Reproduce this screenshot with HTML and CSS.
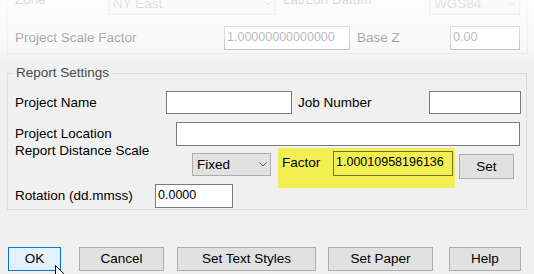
FILE: index.html
```html
<!DOCTYPE html>
<html lang="en">
<head>
    <meta charset="UTF-8">
    <title>Report Settings</title>
    <link rel="stylesheet" href="styles.css">
</head>
<body>
    <div class="group group-top">
        <div class="row row-combo">
            <span class="label lbl-zone">Zone</span>
            <div class="combo combo-zone">
                <span>NY East</span>
                <svg width="8" height="5" viewBox="0 0 8 5"><polyline points="0.5,0.5 4,4 7.5,0.5" /></svg>
            </div>
            <span class="label lbl-datum">Lat/Lon Datum</span>
            <div class="combo combo-datum">
                <span>WGS84</span>
                <svg width="8" height="5" viewBox="0 0 8 5"><polyline points="0.5,0.5 4,4 7.5,0.5" /></svg>
            </div>
        </div>
        <div class="row row-scale">
            <span class="label lbl-scale">Project Scale Factor</span>
            <input type="text" class="field field-scale" value="1.00000000000000">
            <span class="label lbl-basez">Base Z</span>
            <input type="text" class="field field-basez" value="0.00">
        </div>
    </div>

    <div class="group group-report">
        <span class="group-title">Report Settings</span>

        <div class="row row-name">
            <span class="label lbl-name">Project Name</span>
            <input type="text" class="field field-name">
            <span class="label lbl-job">Job Number</span>
            <input type="text" class="field field-job">
        </div>

        <div class="row row-location">
            <span class="label lbl-location">Project Location</span>
            <input type="text" class="field field-location">
        </div>

        <div class="row row-distance">
            <span class="label lbl-distance">Report Distance Scale</span>
            <div class="combo combo-fixed">
                <span>Fixed</span>
                <svg width="8" height="5" viewBox="0 0 8 5"><polyline points="0.5,0.5 4,4 7.5,0.5" /></svg>
            </div>
            <div class="highlight">
                <span class="label lbl-factor">Factor</span>
                <input type="text" class="field field-factor" value="1.00010958196136">
            </div>
            <button class="btn btn-set">Set</button>
        </div>

        <div class="row row-rotation">
            <span class="label lbl-rotation">Rotation (dd.mmss)</span>
            <input type="text" class="field field-rotation" value="0.0000">
        </div>
    </div>

    <div class="buttons">
        <button class="btn btn-ok">OK</button>
        <button class="btn btn-cancel">Cancel</button>
        <button class="btn btn-styles">Set Text Styles</button>
        <button class="btn btn-paper">Set Paper</button>
        <button class="btn btn-help">Help</button>
    </div>

    <!-- weisser Verlauf oben und Mauszeiger liegen ueber dem Dialog -->
    <div class="fade"></div>
    <svg class="cursor" width="13" height="20" viewBox="0 0 13 20">
        <path d="M0.5 0.5 L0.5 16.5 L4.5 12.5 L7.5 18.5 L9.5 17.5 L6.5 11.5 L11.5 11.5 Z" />
    </svg>
</body>
</html>
```

FILE: styles.css
```css
* {
    box-sizing: border-box;
}

body {
    margin: 0;
    width: 534px;
    height: 274px;
    overflow: hidden;
    position: relative;
    background-color: #f0f0f0;
    font-family: 'Liberation Sans', Arial, sans-serif;
    font-size: 13.5px;
    color: #000;
}

.group {
    position: relative;
    margin-left: 7px;
    border: 1px solid #dcdcdc;
}

.group-top {
    width: 521px;
    margin-top: -30px;
    padding: 21px 0 3px 7px;
}

.group-report {
    width: 520px;
    margin-top: 19px;
    padding: 17px 0 1px 7px;
}

.group-title {
    position: absolute;
    top: -9px;
    left: 5px;
    padding: 0 3px;
    line-height: 16px;
    background-color: #f0f0f0;
    color: #4a4a4a;
}

.row {
    display: flex;
    align-items: center;
}

.label {
    display: block;
    flex: none;
    line-height: 16px;
    white-space: nowrap;
}

.field {
    flex: none;
    display: block;
    margin: 0;
    padding: 0 2px 3px;
    border: 1px solid #7a7a7a;
    background-color: #fff;
    font-family: 'Liberation Sans', Arial, sans-serif;
    font-size: 12.5px;
    color: #000;
    outline: none;
}

.combo {
    flex: none;
    display: flex;
    align-items: center;
    justify-content: space-between;
    padding: 0 3px 0 4px;
    border: 1px solid #adadad;
    background-color: #e1e1e1;
}

.combo svg polyline {
    fill: none;
    stroke: #606060;
    stroke-width: 1;
}

.btn {
    flex: none;
    margin: 0;
    padding: 0 0 1px;
    border: 1px solid #adadad;
    background-color: #e1e1e1;
    font-family: 'Liberation Sans', Arial, sans-serif;
    font-size: 13.5px;
    color: #000;
}

/* oberer, abgeblendeter Bereich */
.row-combo {
    height: 23px;
    align-items: flex-start;
}

.row-combo .combo {
    height: 23px;
    color: #444;
}

.lbl-zone { width: 93px; }
.combo-zone { width: 168px; }
.lbl-datum { width: 146px; margin-left: 7px; }
.combo-datum { width: 91px; }

.row-scale {
    height: 24px;
    margin-top: 11px;
}

.row-scale .field {
    height: 24px;
    border-color: #8a8a8a;
    color: #1d2c4a;
}

.lbl-scale { width: 209px; }
.field-scale { width: 126px; }
.lbl-basez { width: 93px; margin-left: 7px; }
.field-basez { width: 70px; }

/* Report Settings */
.row-name {
    height: 23px;
}

.row-name .field {
    height: 23px;
}

.lbl-name { width: 151px; }
.field-name { width: 126px; }
.lbl-job { width: 131px; margin-left: 6px; }
.field-job { width: 92px; }

.row-location {
    height: 24px;
    margin-top: 8px;
}

.lbl-location { width: 161px; }
.field-location { width: 344px; height: 24px; }

.row-distance {
    height: 23px;
    margin-top: 7px;
    align-items: flex-start;
}

.lbl-distance {
    width: 177px;
    margin-top: -10px;
}

.combo-fixed {
    width: 79px;
    height: 23px;
}

.highlight {
    flex: none;
    display: flex;
    align-items: center;
    width: 177px;
    height: 40px;
    margin: -5px 0 0 7px;
    padding: 0 2px 10px 4px;
    background-color: #f1ef52;
}

.lbl-factor { width: 51px; }

.field-factor {
    width: 120px;
    height: 25px;
    border-color: #74722c;
    background-color: transparent;
}

.btn-set {
    width: 55px;
    height: 25px;
    margin: 1px 0 0 4px;
}

.row-rotation {
    height: 24px;
    margin-top: 8px;
}

.lbl-rotation { width: 140px; }
.field-rotation { width: 78px; height: 24px; }

/* Schaltflaechen unten */
.buttons {
    display: flex;
    height: 24px;
    margin-top: 37px;
    padding-left: 8px;
}

.buttons .btn {
    height: 24px;
}

.btn-ok {
    width: 53px;
    border-color: #0078d7;
    background-color: #e5f1fb;
}

.btn-cancel { width: 85px; margin-left: 18px; }
.btn-styles { width: 139px; margin-left: 13px; }
.btn-paper { width: 105px; margin-left: 12px; }
.btn-help { width: 72px; margin-left: 16px; }

.fade {
    position: absolute;
    top: 0;
    left: 0;
    width: 534px;
    height: 62px;
    pointer-events: none;
    background: linear-gradient(to bottom,
        rgba(255, 255, 255, 0.86) 0,
        rgba(255, 255, 255, 0.66) 38px,
        rgba(255, 255, 255, 0.45) 52px,
        rgba(255, 255, 255, 0) 62px);
}

.cursor {
    position: absolute;
    left: 55px;
    top: 265px;
}

.cursor path {
    fill: #fff;
    stroke: #000;
    stroke-width: 1;
}
```
